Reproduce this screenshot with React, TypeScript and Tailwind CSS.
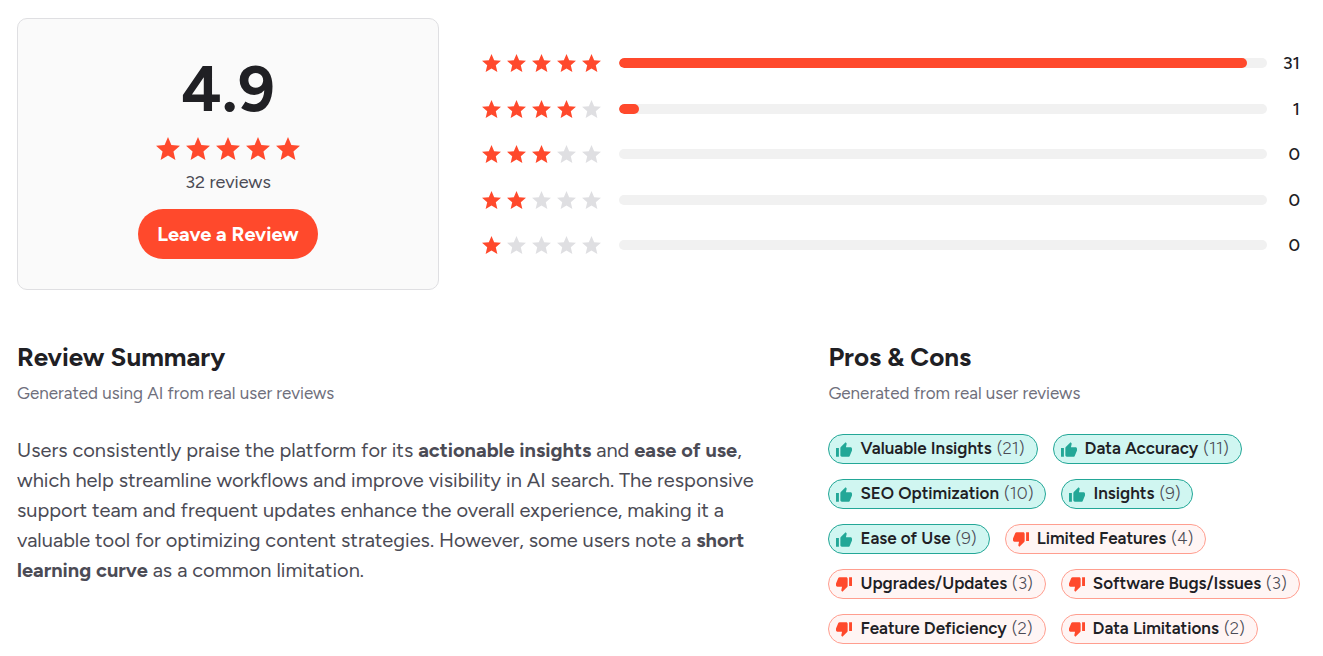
type Feedback = {
  label: string;
  count: number;
  positive: boolean;
};

const ratings = [
  { stars: 5, count: 31 },
  { stars: 4, count: 1 },
  { stars: 3, count: 0 },
  { stars: 2, count: 0 },
  { stars: 1, count: 0 },
];

const total = 32;

const feedback: Feedback[] = [
  { label: "Valuable Insights", count: 21, positive: true },
  { label: "Data Accuracy", count: 11, positive: true },
  { label: "SEO Optimization", count: 10, positive: true },
  { label: "Insights", count: 9, positive: true },
  { label: "Ease of Use", count: 9, positive: true },
  { label: "Limited Features", count: 4, positive: false },
  { label: "Upgrades/Updates", count: 3, positive: false },
  { label: "Software Bugs/Issues", count: 3, positive: false },
  { label: "Feature Deficiency", count: 2, positive: false },
  { label: "Data Limitations", count: 2, positive: false },
];

function Stars({ filled, size }: { filled: number; size: string }) {
  return (
    <div className="flex gap-1.5" role="img" aria-label={`${filled} out of 5 stars`}>
      {[1, 2, 3, 4, 5].map((n) => (
        <svg
          key={n}
          viewBox="2 2 20 19"
          className={`${size} ${n <= filled ? "fill-[#ff492c]" : "fill-[#dfdfe2]"}`}
        >
          <path d="M12 17.27 18.18 21l-1.64-7.03L22 9.24l-7.19-.61L12 2 9.19 8.63 2 9.24l5.46 4.73L5.82 21z" />
        </svg>
      ))}
    </div>
  );
}

function ThumbIcon({ up }: { up: boolean }) {
  return (
    <svg
      viewBox="1 1 22 20"
      className={`h-[15px] w-4 ${up ? "fill-[#23a797]" : "rotate-180 fill-[#ff492c]"}`}
      aria-hidden="true"
    >
      <path d="M1 21h4V9H1v12zm22-11c0-1.1-.9-2-2-2h-6.31l.95-4.57.03-.32c0-.41-.17-.79-.44-1.06L14.17 1 7.59 7.59C7.22 7.95 7 8.45 7 9v10c0 1.1.9 2 2 2h9c.83 0 1.54-.5 1.84-1.22l3.02-7.05c.09-.23.14-.47.14-.73v-2z" />
    </svg>
  );
}

function ScoreCard() {
  return (
    <div className="flex flex-col items-center rounded-[10px] border border-[#dfdfe2] bg-[#fafafa] pt-[38px] pb-[30px]">
      <div className="text-[64px] leading-[64px] font-bold">4.9</div>
      <div className="mt-4">
        <Stars filled={5} size="h-[23px] w-6" />
      </div>
      <p className="mt-2.5 text-[18px] leading-6 text-[#4b4b55]">32 reviews</p>
      <button
        type="button"
        className="mt-[15px] h-[50px] rounded-full bg-[#ff492c] px-[19px] text-[20px] font-bold text-white"
      >
        Leave a Review
      </button>
    </div>
  );
}

function RatingBars() {
  return (
    <div className="flex flex-col justify-between pt-[33px] pr-[7px] pb-[33px]">
      {ratings.map(({ stars, count }) => (
        <div key={stars} className="flex h-6 items-center">
          <Stars filled={stars} size="h-[18px] w-[19px]" />
          <div className="ml-[18px] h-2.5 flex-1 overflow-hidden rounded-full bg-[#f1f1f1]">
            <div
              className="h-full rounded-full bg-[#ff492c]"
              style={{ width: `${(count / total) * 100}%` }}
            />
          </div>
          <span className="w-[33px] text-right text-[18px] leading-6 font-medium">{count}</span>
        </div>
      ))}
    </div>
  );
}

function SectionHeading({ title, note }: { title: string; note: string }) {
  return (
    <>
      <h2 className="text-[26px] leading-9 font-bold">{title}</h2>
      <p className="mt-1.5 text-[17px] leading-6 text-[#6f6f7c]">{note}</p>
    </>
  );
}

function FeedbackPill({ label, count, positive }: Feedback) {
  return (
    <li
      className={`flex h-[30px] items-center rounded-full border pr-3 pl-[7px] text-[17px] ${
        positive ? "border-[#23a797] bg-[#d0f6f1]" : "border-[#ff9e8f] bg-[#fff5f4]"
      }`}
    >
      <ThumbIcon up={positive} />
      <span className="ml-2 font-semibold">{label}</span>
      <span className="ml-[5px] font-light text-[#4b4b55]">({count})</span>
    </li>
  );
}

export default function App() {
  return (
    <main className="bg-white pt-[18px] pr-4 pb-3 pl-[17px] font-['Figtree','Lato',sans-serif] text-[#202024]">
      <section className="grid grid-cols-[22fr_43fr] gap-[43px]">
        <ScoreCard />
        <RatingBars />
      </section>

      <div className="mt-[49px] grid grid-cols-[14fr_9fr] gap-[67px]">
        <section>
          <SectionHeading title="Review Summary" note="Generated using AI from real user reviews" />
          <p className="mt-[30px] text-[20px] leading-[30px] text-[#4b4b55]">
            Users consistently praise the platform for its <strong>actionable insights</strong> and{" "}
            <strong>ease of use</strong>, which help streamline workflows and improve visibility in
            AI search. The responsive support team and frequent updates enhance the overall
            experience, making it a valuable tool for optimizing content strategies. However, some
            users note a <strong>short learning curve</strong> as a common limitation.
          </p>
        </section>

        <section>
          <SectionHeading title="Pros & Cons" note="Generated from real user reviews" />
          <ul className="mt-[29px] flex flex-wrap gap-[15px]">
            {feedback.map((item) => (
              <FeedbackPill key={item.label} {...item} />
            ))}
          </ul>
        </section>
      </div>
    </main>
  );
}
